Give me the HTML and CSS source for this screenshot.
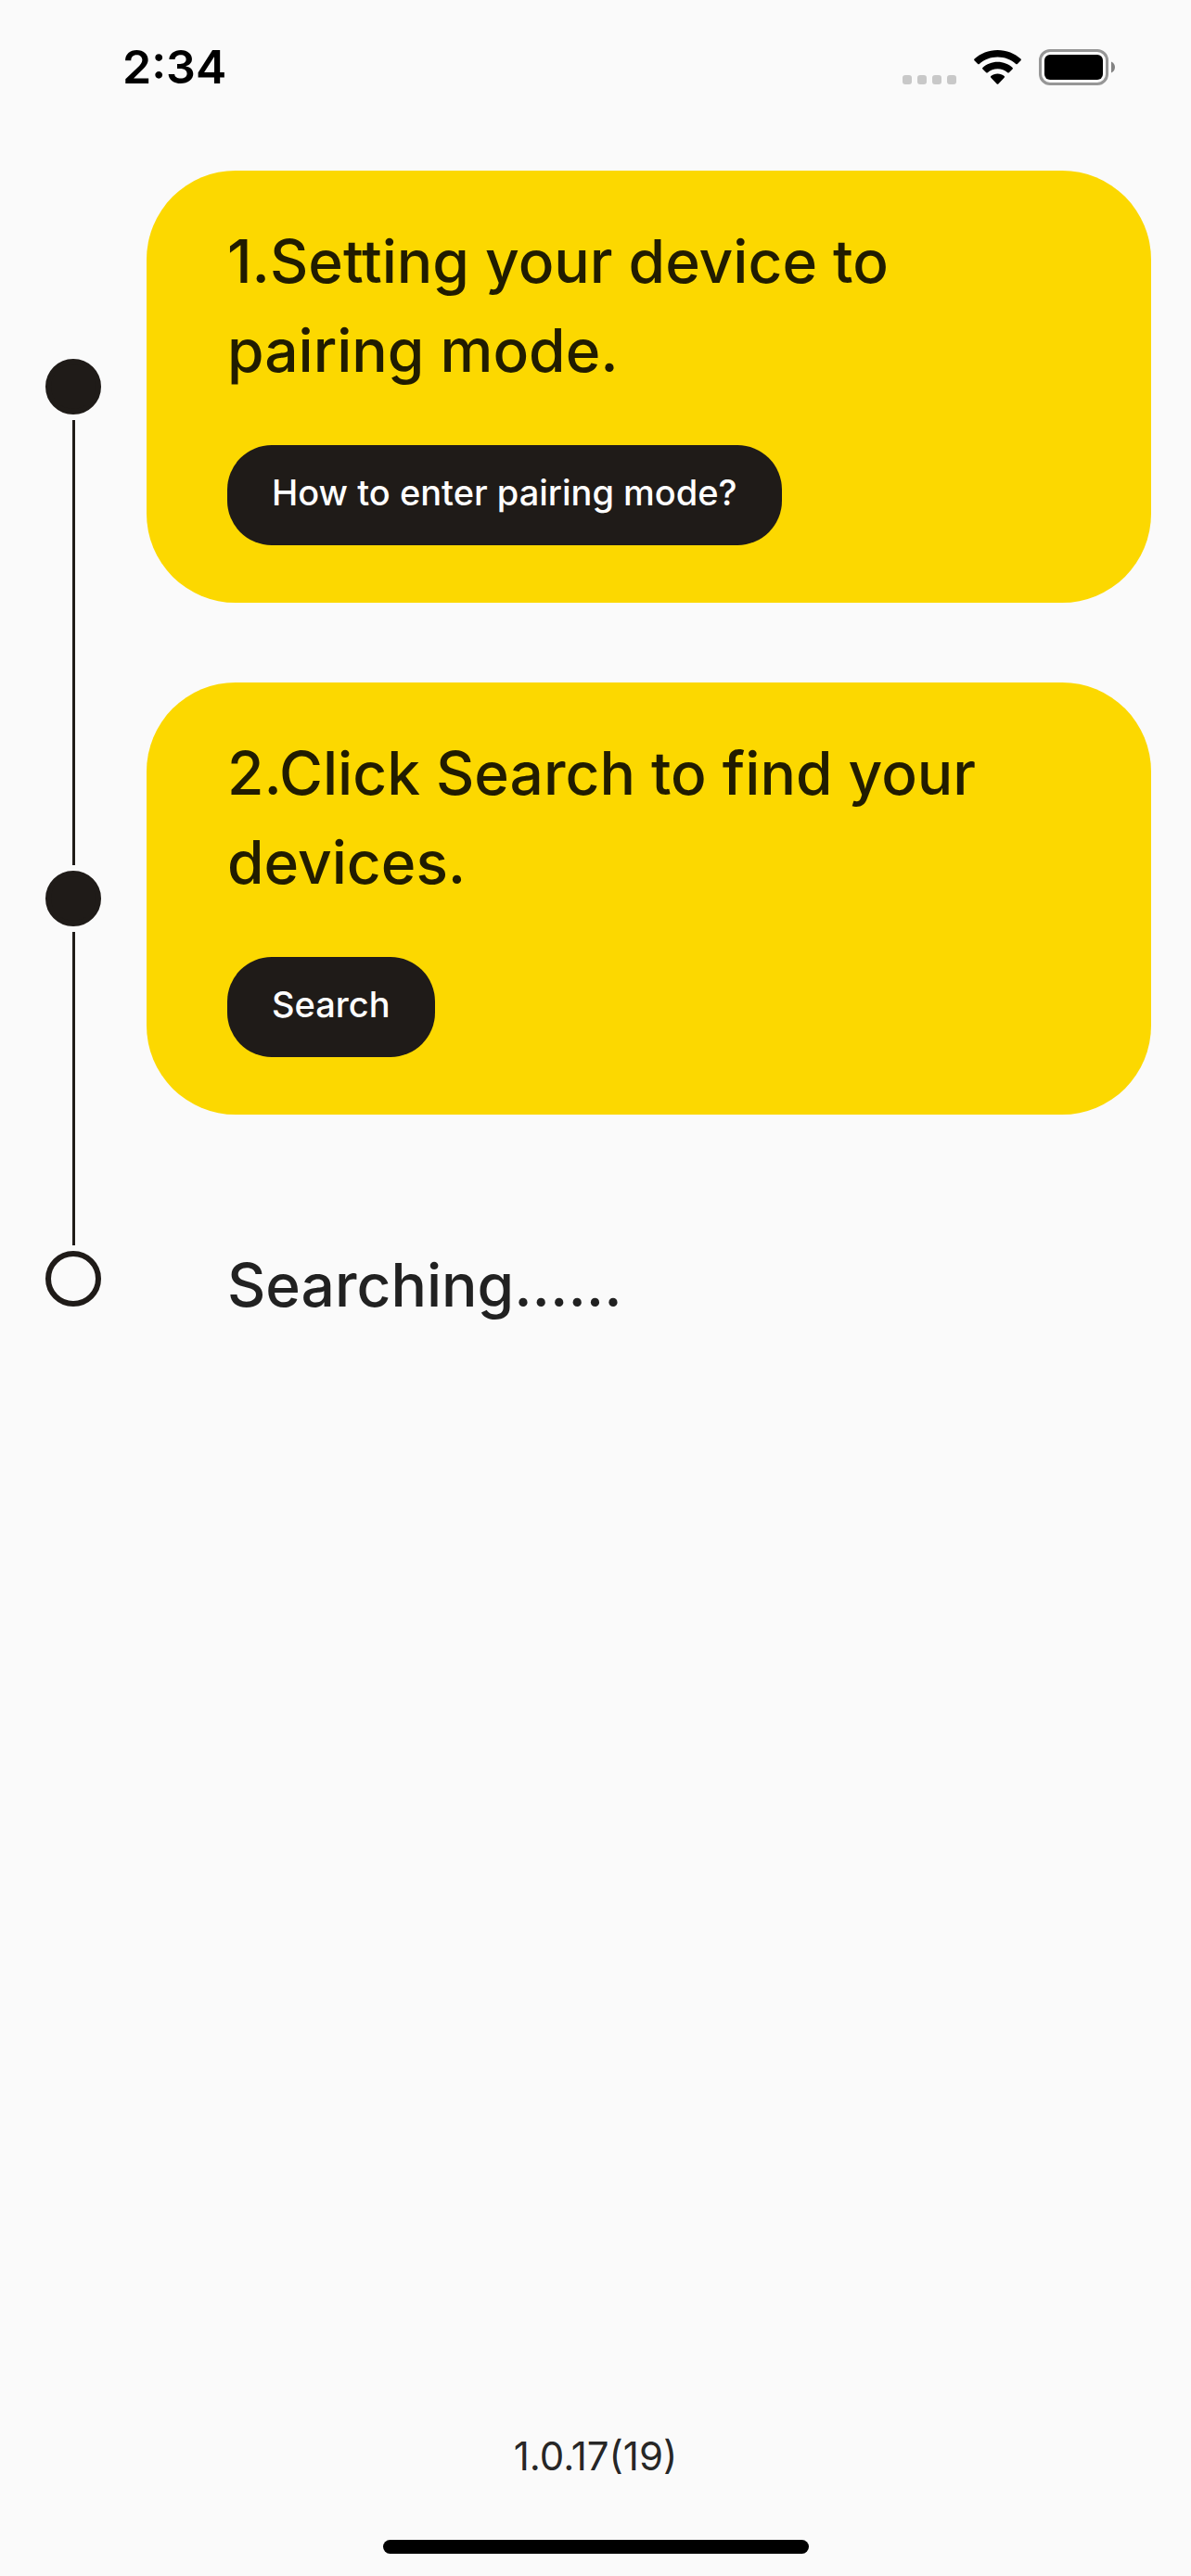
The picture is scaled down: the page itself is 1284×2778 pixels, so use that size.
FILE: index.html
```html
<!DOCTYPE html>
<html lang="en">
<head>
  <meta charset="utf-8">
  <meta name="viewport" content="width=device-width, initial-scale=1">
  <title>Device pairing</title>
  <link rel="stylesheet" href="styles.css">
</head>
<body class="screen">
  <header class="status">
    <time class="status-time">2:34</time>
    <div class="status-icons">
      <svg class="icon-signal" viewBox="0 0 58 39" aria-hidden="true">
        <g fill="#c8c8c8">
          <rect x="0" y="28" width="10" height="10" rx="3"/>
          <rect x="16" y="28" width="10" height="10" rx="3"/>
          <rect x="32" y="28" width="10" height="10" rx="3"/>
          <rect x="48" y="28" width="10" height="10" rx="3"/>
        </g>
      </svg>
      <svg class="icon-wifi" viewBox="0 0 51 39" aria-hidden="true">
        <path d="M25.5 1C35.200 1 44 4.700 50.500 10.600Q51.200 11.400 50.500 12.200L46.800 15.900Q46 16.600 45.200 15.900C40 11.200 33 8.500 25.500 8.500S11 11.200 5.800 15.900Q5 16.600 4.200 15.900L.5 12.200Q-.2 11.400 .5 10.600C7 4.700 15.800 1 25.500 1Z"/>
        <path d="M25.500 13.800C31.700 13.800 37.300 16.100 41.600 19.900Q42.400 20.700 41.600 21.500L37.800 25.200Q37 25.900 36.200 25.200C33.400 22.700 29.600 21.200 25.500 21.200S17.600 22.700 14.800 25.200Q14 25.900 13.200 25.200L9.400 21.500Q8.600 20.700 9.400 19.900C13.700 16.100 19.300 13.800 25.500 13.800Z"/>
        <path d="M25.500 26.500C28.300 26.500 30.800 27.500 32.700 29.100Q33.500 29.900 32.700 30.700L26.300 37.400Q25.500 38.100 24.700 37.400L18.300 30.700Q17.500 29.900 18.300 29.100C20.200 27.500 22.700 26.500 25.500 26.500Z"/>
      </svg>
      <svg class="icon-battery" viewBox="0 0 82 39" aria-hidden="true">
        <rect x="1.500" y="1.500" width="72" height="36" rx="10.500" fill="none" stroke="#969696" stroke-width="3"/>
        <rect x="6" y="6" width="63" height="27" rx="6"/>
        <path d="M78 13.500C80.400 14.400 82 16.700 82 19.500S80.400 24.600 78 25.500Z" fill="#828282"/>
      </svg>
    </div>
  </header>

  <main>
    <ol class="steps">
      <li class="step">
        <div class="rail">
          <span class="line line-none"></span>
          <span class="dot"></span>
          <span class="line"></span>
        </div>
        <section class="card card-active">
          <h2 class="title">1.Setting your device to pairing mode.</h2>
          <button class="button" type="button">How to enter pairing mode?</button>
        </section>
      </li>
      <li class="step">
        <div class="rail">
          <span class="line"></span>
          <span class="dot"></span>
          <span class="line"></span>
        </div>
        <section class="card card-active">
          <h2 class="title">2.Click Search to find your devices.</h2>
          <button class="button" type="button">Search</button>
        </section>
      </li>
      <li class="step">
        <div class="rail">
          <span class="line"></span>
          <span class="dot dot-open"></span>
          <span class="line line-none"></span>
        </div>
        <section class="card card-pending">
          <h2 class="title" role="status">Searching......</h2>
        </section>
      </li>
    </ol>
  </main>

  <footer class="footer">
    <p class="version">1.0.17(19)</p>
    <div class="home-bar"></div>
  </footer>
</body>
</html>
```
FILE: styles.css
```css
* {
  box-sizing: border-box;
}

.screen {
  display: flex;
  flex-direction: column;
  min-height: 100vh;
  margin: 0;
  background: #fafafa;
  color: rgba(0, 0, 0, 0.87);
  font-family: Inter, "Liberation Sans", sans-serif;
}

.status {
  display: flex;
  justify-content: space-between;
  align-items: center;
  padding: 53px 82px 49px 132px;
  color: #000;
}

.status-time {
  font-size: 50px;
  font-weight: 600;
  line-height: 39px;
}

.status-icons {
  display: flex;
  gap: 19px;
}

.status-icons svg {
  display: block;
  height: 39px;
}

.icon-signal {
  width: 58px;
}

.icon-wifi {
  width: 51px;
}

.icon-battery {
  width: 82px;
}

.steps {
  margin: 0;
  padding: 0;
  list-style: none;
}

.step {
  display: grid;
  grid-template-columns: 158px 1fr;
  padding-right: 43px;
}

.rail {
  display: flex;
  flex-direction: column;
  align-items: center;
  gap: 6px;
}

.line {
  flex: 1;
  width: 3px;
  background: #1f1b18;
}

.line-none {
  background: none;
}

.dot {
  width: 60px;
  height: 60px;
  border: 6px solid #1f1b18;
  border-radius: 50%;
  background: #1f1b18;
}

.dot-open {
  background: none;
}

.card {
  margin: 43px 0;
  padding: 50px 87px 62px;
  border-radius: 96px;
}

.card-active {
  background: #fcd800;
}

.card-pending {
  padding-bottom: 36px;
}

.title {
  margin: 0;
  font-size: 64px;
  font-weight: 500;
  line-height: 96px;
}

.button {
  display: block;
  margin: 54px 0 0;
  padding: 25px 48px 31px;
  border: 0;
  border-radius: 48px;
  background: #1f1b18;
  color: #fff;
  font-family: inherit;
  font-size: 38px;
  font-weight: 500;
  line-height: 52px;
}

.footer {
  display: flex;
  flex-direction: column;
  align-items: center;
  gap: 66px;
  margin-top: auto;
  padding-bottom: 24px;
}

.version {
  margin: 0;
  font-size: 42px;
  line-height: 48px;
}

.home-bar {
  width: 459px;
  height: 15px;
  border-radius: 8px;
  background: #000;
}
```
